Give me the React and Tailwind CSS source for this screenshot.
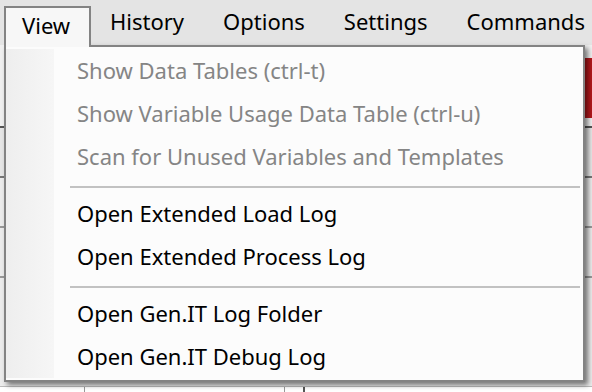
const groups = [
    [
        { label: "Show Data Tables (ctrl-t)", disabled: true },
        { label: "Show Variable Usage Data Table (ctrl-u)", disabled: true },
        { label: "Scan for Unused Variables and Templates", disabled: true },
    ],
    [{ label: "Open Extended Load Log" }, { label: "Open Extended Process Log" }],
    [{ label: "Open Gen.IT Log Folder" }, { label: "Open Gen.IT Debug Log" }],
];

const menus = ["History", "Options", "Settings", "Commands"];

function MenuItem({ label, disabled }) {
    return (
        <div className="flex h-[43px] items-center">
            <div className="w-[48px] self-stretch bg-gradient-to-r from-[#eeeeee] to-[#f6f6f6]" />
            <span
                className={
                    "pl-[23px] text-[22px] whitespace-nowrap " +
                    (disabled ? "text-[#858585]" : "text-black")
                }
            >
                {label}
            </span>
        </div>
    );
}

function Separator() {
    return (
        <div className="flex h-[14px]">
            <div className="w-[48px] bg-gradient-to-r from-[#eeeeee] to-[#f6f6f6]" />
            <div className="flex-1 pt-[8px] pl-[16px] pr-[3px]">
                <div className="h-[2px] bg-[#c2c2c2]" />
            </div>
        </div>
    );
}

export default function App() {
    return (
        <div className="relative w-[592px] h-[392px] overflow-hidden bg-[#f0f0f0] font-['Noto_Sans','DejaVu_Sans',sans-serif]">
            {/* menu bar */}
            <div className="flex h-[45px] bg-[#e4e4e4] pl-[4px] text-[22px] text-black">
                <div className="relative z-10 mt-[6px] h-[41px] w-[87px] border-2 border-b-0 border-[#838383] bg-[#f7f7f7] pl-[16px] leading-[34px]">
                    View
                </div>
                <div className="flex gap-[39px] pl-[19px] pt-[4px] leading-[34px] whitespace-nowrap">
                    {menus.map((m) => (
                        <span key={m}>{m}</span>
                    ))}
                </div>
            </div>

            {/* app content behind the menu */}
            <div className="flex flex-col">
                <div className="flex h-[81px] justify-end pt-[13px]">
                    <div className="h-[60px] w-[40px] bg-[#b3171b]" />
                </div>
                <div className="h-[50px] border-t-2 border-[#555] bg-[#e6e6e6]" />
                <div className="h-[50px] border-t-2 border-[#777] bg-[#ececec]" />
                <div className="h-[50px] border-t-2 border-[#999] bg-[#ececec]" />
                <div className="h-[110px] border-t-2 border-[#999] bg-[#ececec]" />
                <div className="flex h-[20px] border-t border-[#bbb] bg-white">
                    <div className="w-[85px] border-r border-[#999] pl-[24px] pt-[13px]">
                        <div className="h-[3px] w-[10px] bg-[#333]" />
                    </div>
                    <div className="w-[200px] border-r border-[#999] pl-[18px] pt-[15px]">
                        <div className="h-[2px] w-[70px] bg-[#777]" />
                    </div>
                    <div className="w-[20px] border-r-2 border-[#555]" />
                </div>
            </div>

            {/* dropdown */}
            <div className="absolute left-[4px] top-[45px] w-[581px] border-2 border-[#838383] bg-[#fcfcfc] py-[2px] shadow-[3px_3px_5px_rgba(0,0,0,0.5)]">
                {groups.map((g, i) => (
                    <div key={i}>
                        {i > 0 && <Separator />}
                        {g.map((it) => (
                            <MenuItem key={it.label} {...it} />
                        ))}
                    </div>
                ))}
            </div>
        </div>
    );
}
